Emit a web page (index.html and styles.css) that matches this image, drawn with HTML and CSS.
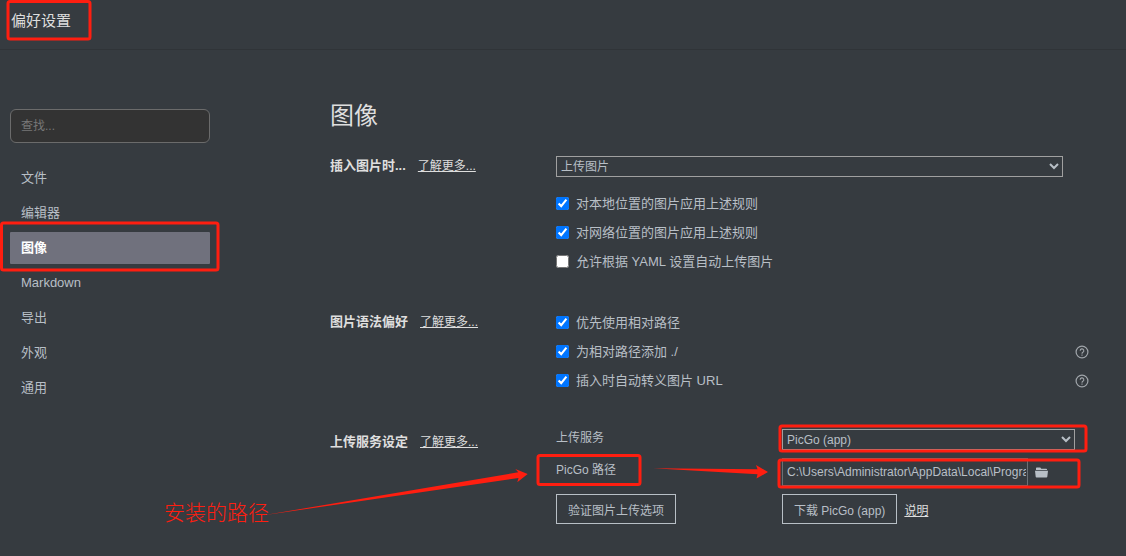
FILE: index.html
```html
<!DOCTYPE html>
<html lang="zh-CN">
<head>
<meta charset="utf-8">
<title>偏好设置</title>
<link rel="stylesheet" href="styles.css">
</head>
<body>
<header class="topbar"><h1 class="topbar-title">偏好设置</h1></header>
<div class="layout">
  <aside class="sidebar">
    <input class="search" type="search" placeholder="查找..." aria-label="查找">
    <nav class="nav">
      <a class="nav-item" href="#file">文件</a>
      <a class="nav-item" href="#editor">编辑器</a>
      <a class="nav-item nav-item-active" href="#image">图像</a>
      <a class="nav-item" href="#markdown">Markdown</a>
      <a class="nav-item" href="#export">导出</a>
      <a class="nav-item" href="#appearance">外观</a>
      <a class="nav-item" href="#general">通用</a>
    </nav>
  </aside>
  <main class="panel">
    <h2 class="panel-title">图像</h2>

    <section class="group">
      <div class="group-head"><label class="group-label" for="insert">插入图片时...</label><a class="link" href="#more">了解更多...</a></div>
      <div class="group-body">
        <select class="select select-wide" id="insert"><option>上传图片</option></select>
        <div class="checks">
          <div class="check-row"><label class="check"><input type="checkbox" checked>对本地位置的图片应用上述规则</label></div>
          <div class="check-row"><label class="check"><input type="checkbox" checked>对网络位置的图片应用上述规则</label></div>
          <div class="check-row"><label class="check"><input type="checkbox">允许根据 YAML 设置自动上传图片</label></div>
        </div>
      </div>
    </section>

    <section class="group group-syntax">
      <div class="group-head"><h3 class="group-label">图片语法偏好</h3><a class="link" href="#more">了解更多...</a></div>
      <div class="group-body">
        <div class="check-row"><label class="check"><input type="checkbox" checked>优先使用相对路径</label></div>
        <div class="check-row"><label class="check"><input type="checkbox" checked>为相对路径添加 ./</label>
          <button class="help" type="button" aria-label="帮助"><svg width="14" height="14" viewBox="0 0 14 14" fill="none" stroke="currentColor"><circle cx="7" cy="7" r="5.9" stroke-width="1.2"/><path d="M5.2 5.7a1.8 1.8 0 1 1 2.7 1.5C7.2 7.6 7 7.9 7 8.7M7 9.6v1.2" stroke-width="1.1"/></svg></button></div>
        <div class="check-row"><label class="check"><input type="checkbox" checked>插入时自动转义图片 URL</label>
          <button class="help" type="button" aria-label="帮助"><svg width="14" height="14" viewBox="0 0 14 14" fill="none" stroke="currentColor"><circle cx="7" cy="7" r="5.9" stroke-width="1.2"/><path d="M5.2 5.7a1.8 1.8 0 1 1 2.7 1.5C7.2 7.6 7 7.9 7 8.7M7 9.6v1.2" stroke-width="1.1"/></svg></button></div>
      </div>
    </section>

    <section class="group group-upload">
      <div class="group-head"><h3 class="group-label">上传服务设定</h3><a class="link" href="#more">了解更多...</a></div>
      <div class="group-body upload">
        <label class="field-label" for="service">上传服务</label>
        <select class="select" id="service"><option>PicGo (app)</option></select>
        <label class="field-label" for="path">PicGo 路径</label>
        <div class="path">
          <input class="path-input" id="path" type="text" value="C:\Users\Administrator\AppData\Local\Programs\PicGo\PicGo.exe">
          <button class="browse" type="button" aria-label="浏览"><svg width="13" height="11" viewBox="0 0 13 11" fill="currentColor"><path d="M1 3V1.2Q1 .5 1.7.5h3.6l1 1.2h5q.7 0 .7.7V3zM0 3.8h13l-.7 6q-.1.7-.8.7h-10q-.7 0-.8-.7z"/></svg></button>
        </div>
        <div class="actions"><button class="button" type="button">验证图片上传选项</button></div>
        <div class="actions"><button class="button" type="button">下载 PicGo (app)</button><a class="link" href="#help">说明</a></div>
      </div>
    </section>
  </main>
</div>

<svg class="marks" width="1126" height="556" viewBox="0 0 1126 556" aria-hidden="true">
  <g class="mark-box">
    <rect x="8" y="1.5" width="82" height="37.5" rx="2"/>
    <rect x="1.5" y="223" width="216.500" height="47" rx="2"/>
    <rect x="538" y="455.5" width="102" height="29" rx="2"/>
    <rect x="780" y="426" width="306" height="25" rx="2"/>
    <rect x="779" y="460" width="300" height="27" rx="2"/>
  </g>
  <path class="mark-arrow" d="M262 515.500L518.300 472.300 515.300 469 527.700 474 517.300 482.300 518.500 478Z"/>
  <path class="mark-arrow" d="M653 468.300L757.500 469.300 756 465 768 472 756.500 478.500 757.500 474.300Z"/>
  <text class="mark-text" x="164" y="520">安装的路径</text>
</svg>
</body>
</html>
```
FILE: styles.css
```css
* { box-sizing: border-box; }

body {
  margin: 0;
  min-height: 100vh;
  background: #363b40;
  color: #b8bfc6;
  font: 13px/20px "Liberation Sans", "Noto Sans CJK SC", sans-serif;
}

h1, h2, h3 { margin: 0; }
input, select, button { font-family: inherit; color: inherit; }

.topbar {
  height: 50px;
  padding: 11px;
  border-bottom: 1px solid #303438;
}
.topbar-title { font-size: 15px; font-weight: 400; color: #dedede; }

.layout {
  display: grid;
  grid-template-columns: 200px 1fr;
  gap: 120px;
  padding: 49px 37px 0 10px;
}

.sidebar { padding-top: 10px; }
.search {
  display: block;
  width: 100%;
  height: 34px;
  padding: 0 10px;
  border: 1px solid #6b6b6b;
  border-radius: 6px;
  background: #333;
  font-size: 12px;
}
.search::placeholder { color: #777; }

.nav {
  display: flex;
  flex-direction: column;
  gap: 3px;
  margin-top: 19px;
}
.nav-item {
  padding: 6px 11px;
  border-radius: 1px;
  color: inherit;
  text-decoration: none;
}
.nav-item-active { background: #70717d; color: #fff; font-weight: 700; }

.panel-title {
  font-size: 24px;
  line-height: 34px;
  font-weight: 400;
  color: #dedede;
}

.group {
  display: grid;
  grid-template-columns: 226px 1fr;
  margin-top: 23px;
}
.group-syntax { margin-top: 32px; }
.group-upload { margin-top: 33px; }
.group-syntax .group-head,
.group-upload .group-head { padding-top: 4px; }
.group-head { display: flex; align-items: flex-start; gap: 12px; white-space: nowrap; }
.group-label { font-size: 13px; line-height: 20px; font-weight: 700; color: #dedede; }
.link { color: #dedede; font-size: 12px; }

.select {
  display: block;
  height: 21px;
  padding: 0;
  border: 1px solid #a0a0a0;
  border-radius: 0;
  background: #363b40;
  font-size: 12px;
}
.select-wide { width: calc(100% - 26px); }

.checks { margin-top: 12px; }
.check-row {
  display: flex;
  justify-content: space-between;
  align-items: center;
  height: 29px;
}
.check { display: flex; align-items: center; gap: 7px; }
.check input { width: 13px; height: 13px; margin: 0; accent-color: #0075ff; }
.help {
  display: flex;
  padding: 0;
  border: 0;
  background: none;
  color: #a0a5aa;
}

.upload {
  display: grid;
  grid-template-columns: 226px 1fr;
  align-items: start;
  font-size: 12px;
}
.upload .select { margin: 1px 14px 0 0; }
.field-label { height: 32px; }
.path { display: flex; margin-top: -2px; }
.path-input {
  width: 246px;
  height: 28px;
  padding: 0 1px 0 4px;
  border: 1px solid #6b7075;
  background: transparent;
  font-size: 12px;
}
.browse { display: flex; align-items: center; padding: 0 7px; border: 0; background: none; }
.actions { display: flex; align-items: baseline; gap: 7px; padding-top: 2px; }
.button {
  height: 30px;
  padding: 0 11px;
  border: 1px solid #b8bfc6;
  background: transparent;
  font-size: 12px;
}

.marks { position: absolute; top: 0; left: 0; pointer-events: none; }
.mark-box { fill: none; stroke: #ff1e10; stroke-width: 3; }
.mark-arrow { fill: #ff1e10; }
.mark-text { fill: #ff1e10; font-size: 21px; font-weight: 300; }
```
